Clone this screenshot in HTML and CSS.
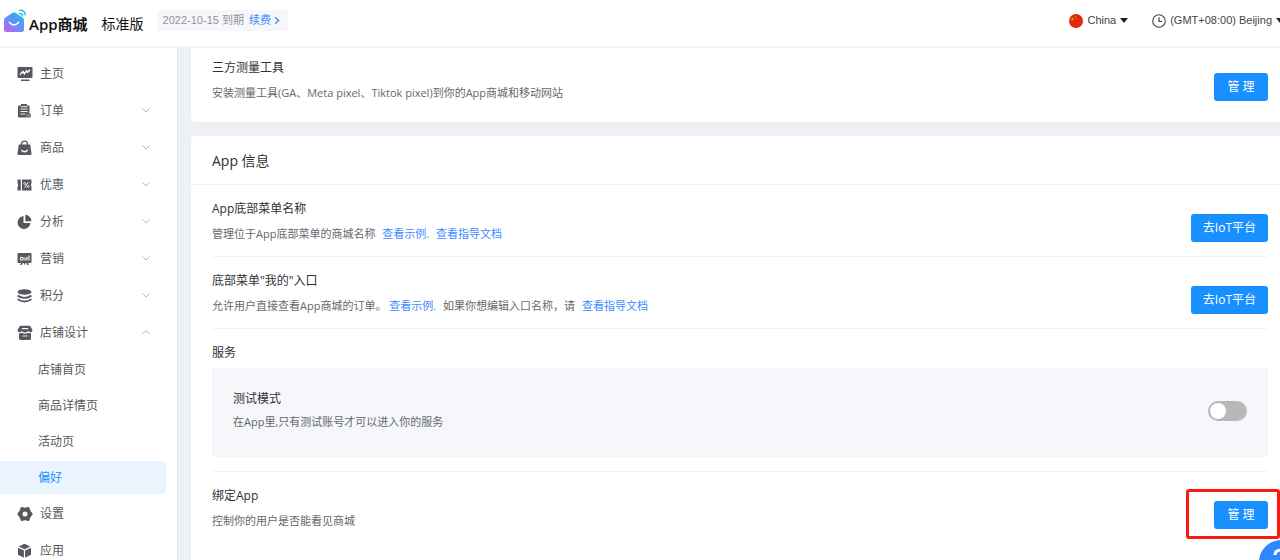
FILE: index.html
```html
<!DOCTYPE html>
<html lang="zh-CN">
<head>
<meta charset="utf-8">
<title>App商城</title>
<link rel="stylesheet" href="styles.css">
</head>
<body>
<header class="topbar">
  <div class="brand">
    <svg class="brand-logo" viewBox="0 0 22 24" aria-hidden="true">
      <defs>
        <linearGradient id="logo-fill" x1="0.8" y1="0" x2="0.1" y2="1">
          <stop offset="0" stop-color="#22b8f0"/>
          <stop offset="0.55" stop-color="#6a8df6"/>
          <stop offset="1" stop-color="#c65cf5"/>
        </linearGradient>
      </defs>
      <path d="M0 11Q0 9.300 1.400 8.400L8.600 3.700Q10 2.900 11.400 3.700L18.600 8.400Q20 9.300 20 11V20.500Q20 23 17.500 23H2.500Q0 23 0 20.500Z" fill="url(#logo-fill)"/>
      <path d="M5.500 13.500Q10 18.500 14.500 13.500" fill="none" stroke="#fff" stroke-width="1.700" stroke-linecap="round"/>
      <path d="M15.500 4.500Q18 4.200 18.600 6.800M15.800 1.200Q20.800 1 21.300 5.800" fill="none" stroke="#2cbdf0" stroke-width="1.500" stroke-linecap="round"/>
    </svg>
    <span class="brand-name">App商城</span>
    <span class="brand-plan">标准版</span>
  </div>
  <div class="expiry">
    <span>2022-10-15 到期</span>
    <a href="#renew">续费<svg class="renew-arrow" viewBox="0 0 6 10" aria-hidden="true"><path d="M1 1.500L4.800 5L1 8.500" fill="none" stroke="currentColor" stroke-width="1.500"/></svg></a>
  </div>
  <div class="locale">
    <button type="button" class="locale-button" aria-haspopup="listbox">
      <svg class="locale-icon" viewBox="0 0 14 14" aria-hidden="true"><circle cx="7" cy="7" r="7" fill="#de2910"/><path d="M3.500 3.200L4 4.600H5.500L4.300 5.500L4.700 6.900L3.500 6L2.300 6.900L2.700 5.500L1.500 4.600H3Z" fill="#f2a20c"/><circle cx="6.500" cy="2.600" r="0.600" fill="#f2a20c"/><circle cx="7.500" cy="4.500" r="0.600" fill="#f2a20c"/></svg>
      <span>China</span>
      <svg class="caret" viewBox="0 0 8 5" aria-hidden="true"><path d="M0 0H8L4 5Z" fill="#222"/></svg>
    </button>
    <button type="button" class="locale-button" aria-haspopup="listbox">
      <svg class="locale-icon" viewBox="0 0 14 14" aria-hidden="true"><circle cx="7" cy="7" r="6.300" fill="none" stroke="#444" stroke-width="1.100"/><path d="M7 3.200V7.500H10" fill="none" stroke="#444" stroke-width="1.200"/></svg>
      <span>(GMT+08:00) Beijing</span>
      <svg class="caret" viewBox="0 0 8 5" aria-hidden="true"><path d="M0 0H8L4 5Z" fill="#222"/></svg>
    </button>
  </div>
</header>

<div class="layout">
  <nav class="sidebar" aria-label="主菜单">
    <ul class="menu">
      <li><a class="menu-item" href="#home">
        <svg class="menu-icon" viewBox="0 0 16 16"><path fill="currentColor" d="M1.500 1H14.500Q15.500 1 15.500 2V11Q15.500 12 14.500 12H1.500Q.5 12 .5 11V2Q.5 1 1.500 1ZM4 13.500H12.500V15H4Z"/><path d="M3 8.500L6 5.500L7.300 8L9.500 4.700L10.500 6.300L13 3.800" fill="none" stroke="#fff" stroke-width="1.400"/></svg>
        <span>主页</span></a></li>
      <li><a class="menu-item" href="#orders">
        <svg class="menu-icon" viewBox="0 0 16 16"><path fill="currentColor" d="M2 2.500H4V1H10V2.500H12.500V9.500L9.300 11L9.800 14.500H2Q1 14.500 1 13.500V3.500Q1 2.500 2 2.500Z"/><path d="M3.500 3.700H10.500M3.500 6H10.500M3.500 8.500H10.500M3.500 11H8" stroke="#fff" stroke-width=".9"/><circle cx="11.700" cy="12.400" r="2.300" fill="currentColor"/><path d="M10.500 12.300L11.500 13.300L13 11.500" stroke="#fff" fill="none" stroke-width=".8"/></svg>
        <span>订单</span><svg class="menu-arrow" viewBox="0 0 8 5"><path d="M.5 .5L4 4L7.500 .5"/></svg></a></li>
      <li><a class="menu-item" href="#products">
        <svg class="menu-icon" viewBox="0 0 16 16"><path fill="currentColor" d="M1.800 4.500H13.200L14.500 13.500Q14.600 15 13 15H2Q.4 15 .5 13.500Z"/><path d="M4.500 6V4.500Q4.500 1.200 7.500 1.200Q10.500 1.200 10.500 4.500V6" fill="none" stroke="currentColor" stroke-width="1.300"/><path d="M4.300 10Q7.500 13.500 10.700 10" fill="none" stroke="#fff" stroke-width="1.400"/></svg>
        <span>商品</span><svg class="menu-arrow" viewBox="0 0 8 5"><path d="M.5 .5L4 4L7.500 .5"/></svg></a></li>
      <li><a class="menu-item" href="#discounts">
        <svg class="menu-icon" viewBox="0 0 16 16"><path fill="currentColor" d="M.5 2.500H3.800V13.500H.5V10Q2.200 8 .5 6ZM5 2.500H14.500V6Q13.300 8 14.500 10V13.500H5Z"/><path d="M11.300 5.200L7.700 10.800" stroke="#fff" stroke-width="1"/><circle cx="7.700" cy="6.500" r="1" fill="none" stroke="#fff" stroke-width=".8"/><circle cx="11.300" cy="9.500" r="1" fill="none" stroke="#fff" stroke-width=".8"/></svg>
        <span>优惠</span><svg class="menu-arrow" viewBox="0 0 8 5"><path d="M.5 .5L4 4L7.500 .5"/></svg></a></li>
      <li><a class="menu-item" href="#analytics">
        <svg class="menu-icon" viewBox="0 0 16 16"><path fill="currentColor" d="M6.500 2V9H13.500A6.500 6.500 0 1 1 6.500 2ZM8.300 .8A6.400 6.400 0 0 1 14.400 7.200H8.300Z"/></svg>
        <span>分析</span><svg class="menu-arrow" viewBox="0 0 8 5"><path d="M.5 .5L4 4L7.500 .5"/></svg></a></li>
      <li><a class="menu-item" href="#marketing">
        <svg class="menu-icon" viewBox="0 0 16 16"><path fill="currentColor" d="M1.500 2H13.500Q14.500 2 14.500 3V11Q14.500 12 13.500 12H11L12 14H10.300L9.300 12H8.200V13.500H6.800V12H5.700L4.700 14H3L4 12H1.500Q.5 12 .5 11V3Q.5 2 1.500 2Z"/><circle cx="4.800" cy="7.700" r="1.500" fill="none" stroke="#fff" stroke-width="1.100"/><path d="M8 9.500V6.500M10 9.500V5.800M12 9.500V4.500" stroke="#fff" stroke-width="1.100"/></svg>
        <span>营销</span><svg class="menu-arrow" viewBox="0 0 8 5"><path d="M.5 .5L4 4L7.500 .5"/></svg></a></li>
      <li><a class="menu-item" href="#points">
        <svg class="menu-icon" viewBox="0 0 16 16"><ellipse cx="7.500" cy="4" rx="7" ry="2.800" fill="currentColor"/><path d="M.7 7.500Q3 9.800 7.500 9.800Q12 9.800 14.300 7.500M.7 11Q3 13.500 7.500 13.500Q12 13.500 14.300 11" fill="none" stroke="currentColor" stroke-width="1.800"/></svg>
        <span>积分</span><svg class="menu-arrow" viewBox="0 0 8 5"><path d="M.5 .5L4 4L7.500 .5"/></svg></a></li>
      <li><a class="menu-item" href="#design" aria-expanded="true">
        <svg class="menu-icon" viewBox="0 0 16 16"><path fill="currentColor" d="M3 .8H13L15.500 5Q15.500 7.300 13.500 7.300Q12 7.300 11.200 6Q8 9 4.800 6Q4 7.300 2.500 7.300Q.5 7.300 .5 5ZM2 8.300Q4 8.500 5 7.700Q8 9.700 11 7.700Q12 8.500 14 8.300V13.500Q14 15 12.500 15H3.500Q2 15 2 13.500Z"/><path d="M4.800 3.600H11.200" stroke="#fff" stroke-width="1.200"/><path d="M5.500 11H10.500" stroke="#fff" stroke-width=".8"/></svg>
        <span>店铺设计</span><svg class="menu-arrow" viewBox="0 0 8 5"><path d="M.5 4L4 .5L7.500 4"/></svg></a>
        <ul class="submenu">
          <li><a class="submenu-item" href="#storefront">店铺首页</a></li>
          <li><a class="submenu-item" href="#detail">商品详情页</a></li>
          <li><a class="submenu-item" href="#campaign">活动页</a></li>
          <li><a class="submenu-item is-active" href="#preferences" aria-current="page">偏好</a></li>
        </ul>
      </li>
      <li><a class="menu-item" href="#settings">
        <svg class="menu-icon" viewBox="0 0 16 16"><path fill="currentColor" stroke="currentColor" stroke-width="2.600" stroke-linejoin="round" d="M4.800 2.300L8 3.200L11.200 2.300L12.200 5.300L14.300 8L12.200 10.700L11.200 13.700L8 12.800L4.800 13.700L3.800 10.700L1.700 8L3.800 5.300Z"/><circle cx="8" cy="8" r="2.500" fill="#fff"/></svg>
        <span>设置</span></a></li>
      <li><a class="menu-item" href="#apps">
        <svg class="menu-icon" viewBox="0 0 16 16"><path fill="currentColor" d="M7.500 .8L13.300 3.500L7.500 6.300L1.700 3.500ZM1 4.700L6.900 7.500V14.700L1 11.700ZM14 4.700L8.100 7.500V14.700L14 11.700Z"/></svg>
        <span>应用</span></a></li>
    </ul>
  </nav>

  <main class="content">
    <section class="card card-continued">
      <div class="row">
        <div class="row-text">
          <h3 class="row-title">三方测量工具</h3>
          <p class="row-desc">安装测量工具(GA、Meta pixel、Tiktok pixel)到你的App商城和移动网站</p>
        </div>
        <button type="button" class="primary">管 理</button>
      </div>
    </section>

    <section class="card card-main">
      <h2 class="card-title">App 信息</h2>
      <div class="row">
        <div class="row-text">
          <h3 class="row-title">App底部菜单名称</h3>
          <p class="row-desc">管理位于App底部菜单的商城名称 <a class="after-text" href="#example">查看示例.</a> <a class="after-text" href="#guide">查看指导文档</a></p>
        </div>
        <button type="button" class="primary">去IoT平台</button>
      </div>
      <div class="row">
        <div class="row-text">
          <h3 class="row-title">底部菜单"我的"入口</h3>
          <p class="row-desc">允许用户直接查看App商城的订单。 <a href="#example-entry">查看示例.</a> <span class="after-text">如果你想编辑入口名称，请</span> <a class="after-text" href="#guide-entry">查看指导文档</a></p>
        </div>
        <button type="button" class="primary">去IoT平台</button>
      </div>
      <div class="row row-stacked">
        <h3 class="row-title">服务</h3>
        <div class="panel">
          <div>
            <label class="row-title" for="test-mode">测试模式</label>
            <p class="row-desc panel-desc">在App里,只有测试账号才可以进入你的服务</p>
          </div>
          <input class="switch" type="checkbox" role="switch" id="test-mode">
        </div>
      </div>
      <div class="row">
        <div class="row-text">
          <h3 class="row-title">绑定App</h3>
          <p class="row-desc">控制你的用户是否能看见商城</p>
        </div>
        <div class="highlighted">
          <button type="button" class="primary">管 理</button>
        </div>
      </div>
    </section>
  </main>
</div>
<button type="button" class="help" aria-label="帮助">
  <svg class="help-icon" viewBox="0 0 16 22" aria-hidden="true"><path d="M2 7Q2 2 8 2Q14 2 14 7Q14 10 8 13V15" fill="none" stroke="#fff" stroke-width="3"/><circle cx="8" cy="20" r="2" fill="#fff"/></svg>
</button>
</body>
</html>
```
FILE: styles.css
```css
* {
  box-sizing: border-box;
}

body {
  margin: 0;
  height: 100vh;
  display: flex;
  flex-direction: column;
  overflow: hidden;
  background: #edf1f6;
  color: #303133;
  font: 12px/20px "Open Sans", "Noto Sans CJK SC", sans-serif;
}

h2, h3, p, ul {
  margin: 0;
  padding: 0;
  font-weight: 400;
}

ul {
  list-style: none;
}

a {
  color: #3d8bff;
  text-decoration: none;
}

button {
  font: inherit;
  border: 0;
  cursor: pointer;
}

/* Top bar */
.topbar {
  flex: none;
  display: flex;
  align-items: flex-start;
  height: 48px;
  padding: 9px 0 0 4px;
  background: #fff;
  border-bottom: 2px solid #f3f3f4;
}

.brand {
  display: flex;
  align-items: center;
  color: #111;
}

.brand-logo {
  width: 22px;
  height: 24px;
}

.brand-name {
  margin: 6px 14px 0 3px;
  font-size: 15px;
  line-height: 16px;
  font-weight: 600;
}

.brand-plan {
  margin-top: 6px;
  font-size: 14px;
  line-height: 16px;
}

.expiry {
  display: flex;
  gap: 5px;
  margin: 1px 0 0 13px;
  padding: 0 8px 0 6px;
  border-radius: 2px;
  background: #f5f7fa;
  color: #909399;
  font: 11px/21px "Liberation Sans", "Noto Sans CJK SC", sans-serif;
}

.renew-arrow {
  width: 6px;
  height: 9px;
  margin-left: 3px;
  vertical-align: -1px;
}

.locale {
  display: flex;
  gap: 24px;
  margin: 1px -4px 0 auto;
}

.locale-button {
  display: flex;
  align-items: center;
  gap: 4px;
  padding: 0;
  background: none;
  color: #444;
  font: 11px/21px "Liberation Sans", sans-serif;
  white-space: nowrap;
}

.locale-icon {
  width: 14px;
  height: 14px;
}

.caret {
  width: 8px;
  height: 5px;
}

/* Frame */
.layout {
  flex: 1;
  display: flex;
  min-height: 0;
}

.sidebar {
  flex: none;
  width: 178px;
  padding: 9px 11px 0 0;
  overflow: hidden;
  background: #fff;
  border-right: 1px solid #e3e6ec;
}

.menu-item {
  display: flex;
  align-items: center;
  gap: 7px;
  height: 33px;
  margin-bottom: 4px;
  padding: 0 16px 0 17px;
  color: #55585e;
}

.menu-icon {
  width: 16px;
  height: 16px;
}

.menu-arrow {
  width: 8px;
  height: 5px;
  margin-left: auto;
  fill: none;
  stroke: #b4b9c4;
}

.submenu-item {
  display: block;
  margin-bottom: 3px;
  padding-left: 38px;
  border-radius: 0 4px 4px 0;
  color: #55585e;
  line-height: 33px;
}

.submenu-item.is-active {
  background: #ebf5ff;
  color: #1890ff;
}

/* Cards */
.content {
  flex: 1;
  display: flex;
  flex-direction: column;
  gap: 14px;
  min-width: 0;
  padding-left: 13px;
  overflow: hidden;
}

.card {
  flex: none;
  padding: 0 12px 0 21px;
  border-radius: 4px 0 0 4px;
  background: #fff;
}

.card-continued {
  padding-bottom: 5px;
  border-top-left-radius: 0;
}

.card-continued .row {
  padding-top: 10px;
}

.card-main {
  padding-bottom: 24px;
}

.card-title {
  margin: 0 -12px 0 -21px;
  padding: 15px 21px 13px;
  border-bottom: 1px solid #f2f3f5;
  font-size: 14px;
}

.row {
  display: flex;
  align-items: flex-end;
  justify-content: space-between;
  padding: 14px 0 12px;
  border-bottom: 1px solid #f2f3f5;
}

.row:last-child {
  border-bottom: 0;
  padding-bottom: 14px;
}

.row-title {
  display: block;
  font-size: 12px;
}

.row-desc {
  margin-top: 5px;
  color: #66686c;
  font-size: 11px;
}

.after-text {
  margin-left: 4px;
}

.primary {
  height: 28px;
  min-width: 54px;
  margin-bottom: 2px;
  padding: 0 12px;
  border-radius: 3px;
  background: #1890ff;
  color: #fff;
  font-size: 12px;
}

.row-stacked {
  display: block;
  padding-bottom: 14px;
}

.panel {
  display: flex;
  align-items: center;
  justify-content: space-between;
  margin-top: 5px;
  padding: 21px 21px 25px;
  background: #f5f7fb;
}

.panel-desc {
  margin-top: 3px;
}

.switch {
  appearance: none;
  width: 39px;
  height: 20px;
  margin: 0;
  padding: 2px;
  border-radius: 10px;
  background: #b8b8ba;
}

.switch::before {
  content: "";
  display: block;
  width: 16px;
  height: 16px;
  border-radius: 50%;
  background: #fff;
}

.switch:checked {
  background: #1890ff;
}

.switch:checked::before {
  margin-left: auto;
}

.highlighted {
  position: relative;
}

.highlighted::after {
  content: "";
  position: absolute;
  inset: -12px -12px -8px -28px;
  border: 3px solid #fb1a10;
  border-radius: 3px;
  pointer-events: none;
}

/* Floating help button */
.help {
  position: fixed;
  right: -23px;
  bottom: -24px;
  width: 44px;
  height: 44px;
  padding: 0;
  border-radius: 50%;
  background: #2f88ff;
}

.help-icon {
  width: 16px;
  height: 22px;
}
```
